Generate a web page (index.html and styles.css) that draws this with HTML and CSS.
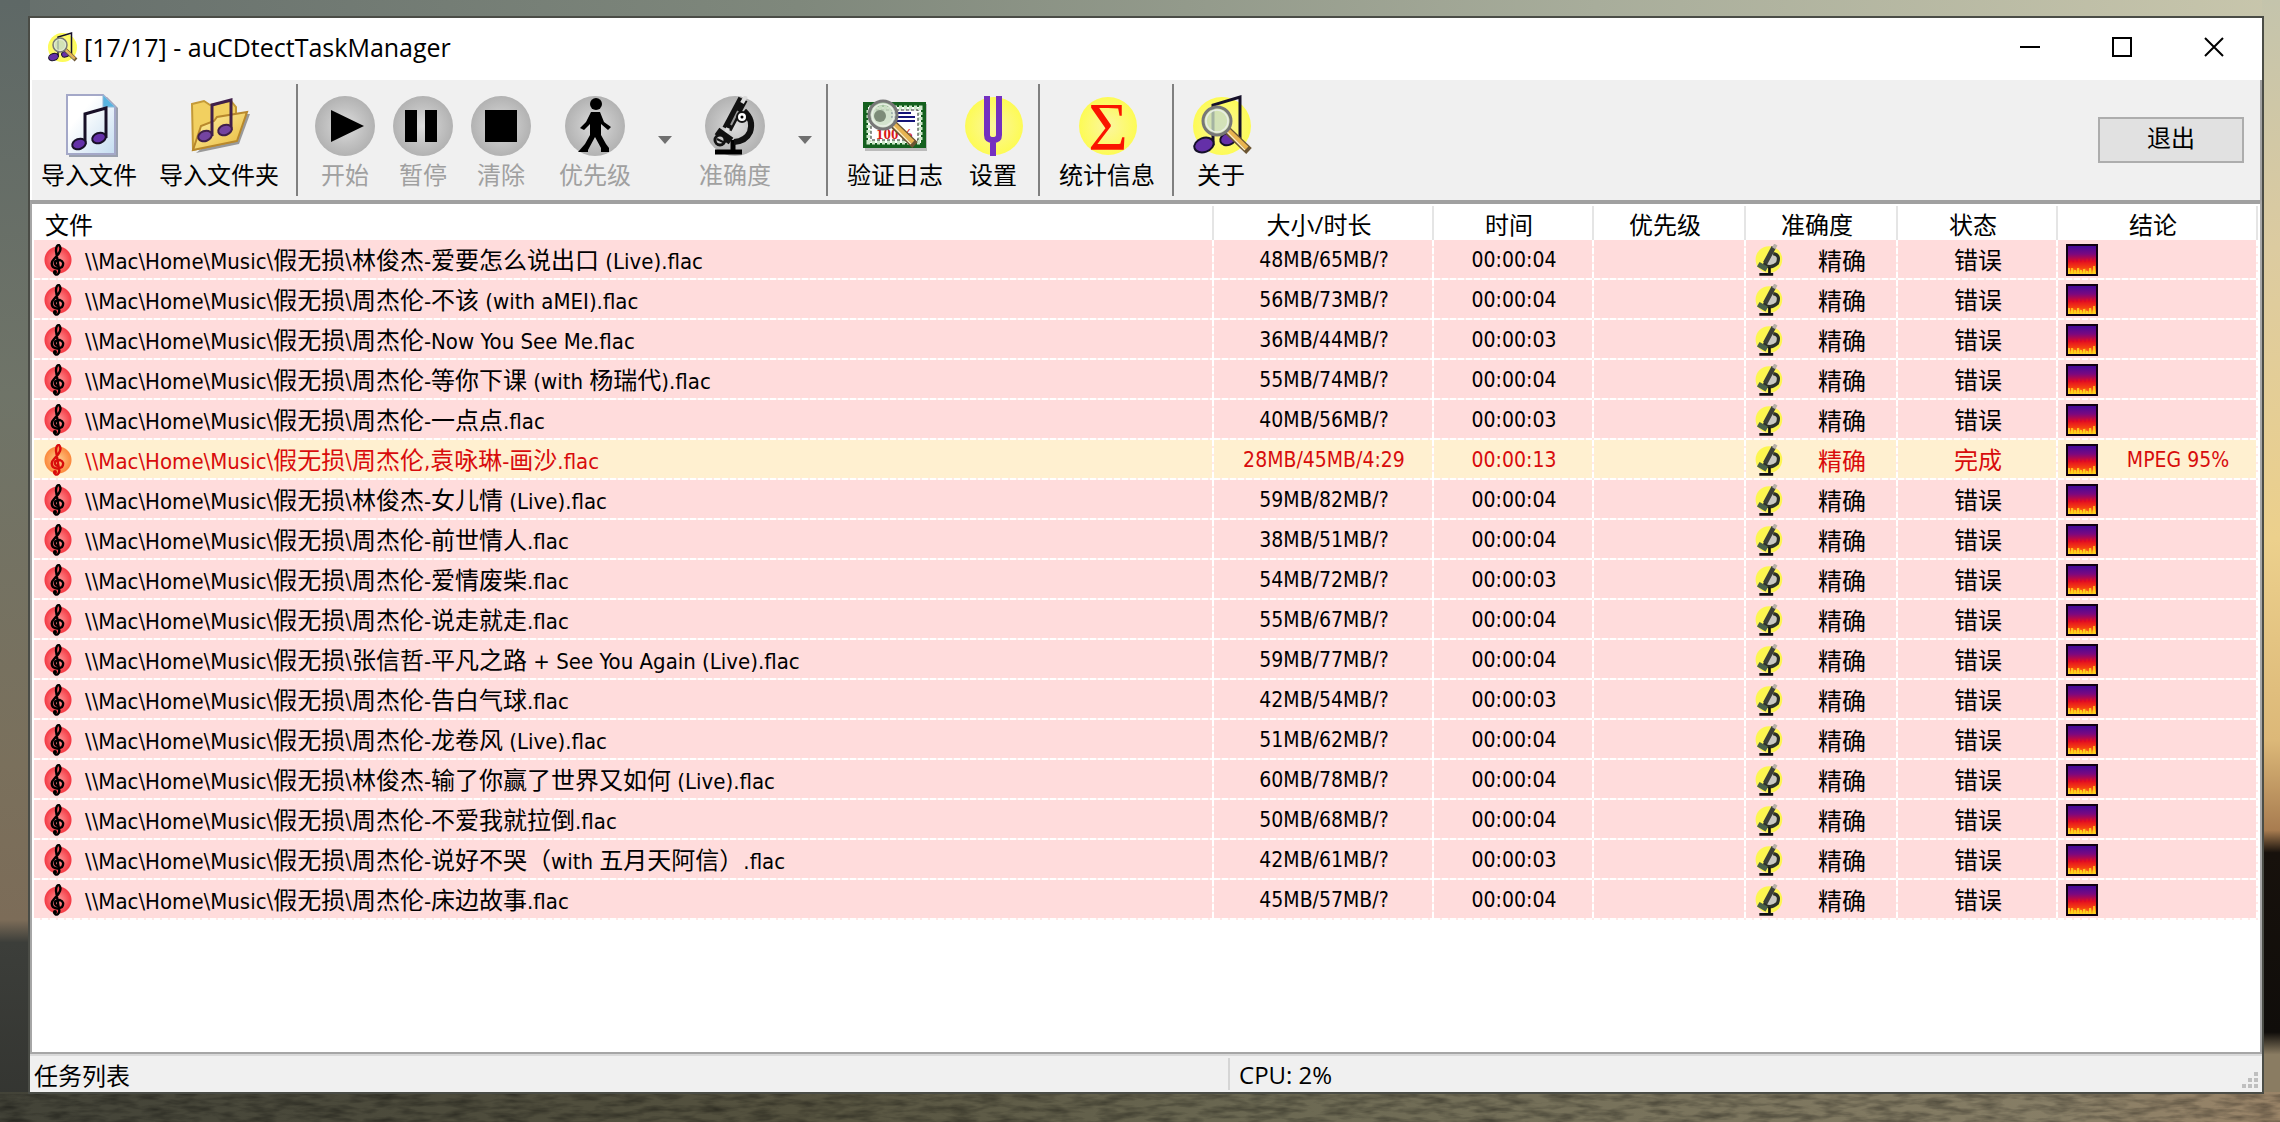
FILE: index.html
```html
<!DOCTYPE html>
<html lang="zh-CN">
<head>
<meta charset="utf-8">
<title>[17/17] - auCDtectTaskManager</title>
<link rel="stylesheet" href="styles.css">
</head>
<body>
<svg class="defs" aria-hidden="true">
  <defs>
    <radialGradient id="gray"><stop offset="0" stop-color="#dedede"/><stop offset="0.6" stop-color="#c2c2c2"/><stop offset="1" stop-color="#b2b2b2"/></radialGradient>
    <radialGradient id="yellow"><stop offset="0" stop-color="#fbf6a0"/><stop offset="1" stop-color="#fdfb55"/></radialGradient>
    <linearGradient id="page" x1="0" y1="0" x2="1" y2="1"><stop offset="0.3" stop-color="#fff"/><stop offset="1" stop-color="#c4dcf0"/></linearGradient>
    <linearGradient id="folder" x1="0" y1="0" x2="1" y2="1"><stop offset="0" stop-color="#fff3a8"/><stop offset="1" stop-color="#e8b838"/></linearGradient>
    <linearGradient id="heat" x1="0" y1="0" x2="0" y2="1"><stop offset="0" stop-color="#3c0a9c"/><stop offset="0.3" stop-color="#7a0880"/><stop offset="0.55" stop-color="#dc0828"/><stop offset="0.75" stop-color="#f6580a"/><stop offset="1" stop-color="#ffe020"/></linearGradient>
    <filter id="ripples" x="0" y="0" width="100%" height="100%"><feTurbulence type="fractalNoise" baseFrequency="0.04 0.16" numOctaves="3" seed="4"/><feColorMatrix values="0 0 0 0 0  0 0 0 0 0  0 0 0 0 0  0 1.6 0 0 -0.6"/></filter>
  </defs>
  <symbol id="scope" viewBox="0 0 60 60">
    <path d="M10 56H37M28 44V55" stroke="#000" stroke-width="5" fill="none"/>
    <path d="M39 15Q49 24 45 36Q41 45 29 46" stroke="#111" stroke-width="6" fill="none"/>
    <path d="M38 3L22 33" stroke="#111" stroke-width="10"/><path d="M41 0L37 7M23 32L21 37" stroke="#ddd" stroke-width="4"/>
    <path d="M33 15L26 29" stroke="#999" stroke-width="2"/>
    <path d="M12 35L26 45" stroke="#111" stroke-width="8"/><circle cx="15" cy="44" r="5" fill="#ccc" stroke="#111" stroke-width="3"/>
    <path d="M12 43L20 47" stroke="#111" stroke-width="2"/>
    <circle cx="37" cy="21" r="5" fill="#fff" stroke="#111" stroke-width="2"/><circle cx="37" cy="21" r="1.5"/>
  </symbol>
  <symbol id="scope-small" viewBox="0 0 60 60">
    <circle cx="28" cy="29" r="25" fill="#fdf650"/>
    <path d="M37 6L20 38Q30 48 44 36Q50 20 36 18" fill="#c8c8c0" stroke="#2c3028" stroke-width="6"/>
    <path d="M37 6L21 36" stroke="#3c403a" stroke-width="9"/><path d="M41 1L37 8" stroke="#b8b0a8" stroke-width="7"/>
    <path d="M8 38L24 47" stroke="#4a6048" stroke-width="10"/><path d="M29 44V56M10 57H36" stroke="#101010" stroke-width="5"/>
  </symbol>
  <symbol id="clef" viewBox="0 0 32 32">
    <path d="M12 28Q13 32 16 30Q18 28 17 25L14 7Q14 1 17 1Q20 4 17 9Q15 12 12 15Q8 19 11 23Q15 26 20 23Q23 18 18 16Q12 16 13 20Q14 22 16 22" fill="none" stroke="currentColor" stroke-width="2.4"/>
    <circle cx="13" cy="28" r="2" fill="currentColor"/>
  </symbol>
  <symbol id="spectrum" viewBox="0 0 32 32">
    <path fill="url(#heat)" stroke="#100010" stroke-width="2" d="M1 1H31V31H1Z"/>
    <path d="M3 21L5 16 7 20 9 15 11 19 13 14 15 19 17 15 19 19 21 14 23 18 25 13 27 18 29 12V24L27 27 25 23 22 28 19 24 16 28 13 23 10 27 7 24 5 27 3 25Z" fill="#f01818" opacity=".4"/>
    <path d="M3 24V30M6 30V24M9 30V26M12 30V24M15 30V26M18 30V25M21 30V27M24 30V24M28 30V22" stroke="#ffd820" stroke-width="2" opacity=".8"/>
  </symbol>
  <symbol id="glass" viewBox="0 0 64 64">
    <path d="M38 37L60 58" stroke="#6b5532" stroke-width="8"/><path d="M38 36L58 55" stroke="#e8b450" stroke-width="4"/><path d="M38 39L56 57" stroke="#fff0c0" stroke-width="1.5"/>
    <circle cx="28" cy="28" r="14" fill="#c8dcc0" fill-opacity=".8" stroke="#777" stroke-width="3"/><circle cx="28" cy="28" r="11" fill="none" stroke="#e8eee4" stroke-width="1.5"/>
  </symbol>
  <symbol id="about" viewBox="0 0 64 64">
    <circle cx="33" cy="33" r="29" fill="url(#yellow)"/>
    <path d="M24 52V12L51 4V46" fill="none" stroke="#15102a" stroke-width="3"/>
    <ellipse cx="15" cy="52" rx="10" ry="7" transform="rotate(-20 15 52)" fill="#6430a8" stroke="#15102a" stroke-width="2"/>
    <ellipse cx="39" cy="46" rx="8" ry="6" transform="rotate(-20 39 46)" fill="#6430a8" stroke="#15102a" stroke-width="2"/>
    <use href="#glass" width="64" height="64"/>
  </symbol>
</svg>
<svg class="water" aria-hidden="true"><rect width="100%" height="100%" filter="url(#ripples)"/></svg>

<main class="window">
  <header class="titlebar">
    <svg class="app-icon"><use href="#about"/></svg>
    <h1 class="title">[17/17] - auCDtectTaskManager</h1>
    <button class="win-btn" aria-label="最小化"><svg viewBox="0 0 20 20"><path d="M0 10H20"/></svg></button>
    <button class="win-btn" aria-label="最大化"><svg viewBox="0 0 20 20"><path d="M1 1H19V19H1Z"/></svg></button>
    <button class="win-btn" aria-label="关闭"><svg viewBox="0 0 20 20"><path d="M1 1L19 19M19 1L1 19"/></svg></button>
  </header>

  <nav class="toolbar">
    <button class="tool"><svg viewBox="0 0 64 64"><path d="M12 4H50L61 15V64H12Z" fill="#9aa0ae"/><path d="M10 2H46L58 14V61H10Z" fill="url(#page)" stroke="#a4a8c8" stroke-width="2"/><path d="M46 2V14H58Z" fill="#58b4e0" stroke="#90b8d8"/><path d="M28 51V21L49 15V45" fill="none" stroke="#181028" stroke-width="3"/><ellipse cx="22" cy="51" rx="7" ry="5" transform="rotate(-20 22 51)" fill="#6430a8" stroke="#181028" stroke-width="2"/><ellipse cx="42" cy="45" rx="7" ry="5" transform="rotate(-20 42 45)" fill="#6430a8" stroke="#181028" stroke-width="2"/></svg><span>导入文件</span></button>
    <button class="tool"><svg viewBox="0 0 64 64"><path d="M9 60L52 51 63 21H57" fill="#999"/><path d="M5 11L17 8 23 12 44 8 49 14V48L6 57Z" fill="#f2d060" stroke="#c49a38" stroke-width="2"/><path d="M6 57L14 33 27 28 30 24 60 19 50 48Z" fill="url(#folder)" stroke="#b8882c" stroke-width="2"/><path d="M25 43V12L44 7V37" fill="none" stroke="#40204a" stroke-width="3"/><ellipse cx="18" cy="43" rx="7" ry="5" transform="rotate(-20 18 43)" fill="#7444a0" stroke="#40204a" stroke-width="2"/><ellipse cx="38" cy="37" rx="7" ry="5" transform="rotate(-20 38 37)" fill="#7444a0" stroke="#40204a" stroke-width="2"/></svg><span>导入文件夹</span></button>
    <hr class="sep">
    <button class="tool icon-tool" disabled><svg viewBox="0 0 64 64"><circle cx="32" cy="33" r="30" fill="url(#gray)"/><path d="M18 17L51 33 18 49Z"/></svg><span>开始</span></button>
    <button class="tool icon-tool" disabled><svg viewBox="0 0 64 64"><circle cx="32" cy="33" r="30" fill="url(#gray)"/><path d="M14 17H26V49H14ZM34 17H46V49H34Z"/></svg><span>暂停</span></button>
    <button class="tool icon-tool" disabled><svg viewBox="0 0 64 64"><circle cx="32" cy="33" r="30" fill="url(#gray)"/><path d="M16 17H48V49H16Z"/></svg><span>清除</span></button>
    <button class="tool menu-tool" disabled><svg viewBox="0 0 64 64"><circle cx="32" cy="33" r="30" fill="url(#gray)"/><circle cx="33" cy="11" r="6"/><path d="M28 19H37L41 29 48 34 45 37 38 31V42L43 51 46 55V59H38V55L32 44 25 57V59H15L22 51 27 42V31L21 37 17 35 23 29Z"/></svg><span>优先级</span></button>
    <button class="drop" aria-label="优先级选项" disabled></button>
    <button class="tool menu-tool" disabled><svg viewBox="0 0 64 64"><circle cx="32" cy="33" r="30" fill="url(#gray)"/><use href="#scope" x="2" y="3" width="60" height="60"/></svg><span>准确度</span></button>
    <button class="drop" aria-label="准确度选项" disabled></button>
    <hr class="sep">
    <button class="tool"><svg viewBox="0 0 64 64"><path d="M2 11H64V58H2Z" fill="#bbb"/><path d="M0 9H63V55H0Z" fill="#14601e"/><path d="M5 14H58V50H5Z" fill="#fff"/><path d="M6 15H57V49H6Z" fill="none" stroke="#cfe8cc" stroke-width="5" stroke-dasharray="3 2"/><path d="M8 17H55V47H8Z" fill="none" stroke="#333" stroke-width="1" stroke-dasharray="3 2"/><path d="M28 20H48M28 24H52M30 28H52" stroke="#141478" stroke-width="2"/><text x="13" y="46" class="mark">100%</text><use href="#glass" x="-8" y="-6" width="64" height="64"/><circle cx="17" cy="23" r="6" fill="#7d8c78"/></svg><span>验证日志</span></button>
    <button class="tool icon-tool"><svg viewBox="0 0 64 64"><circle cx="33" cy="33" r="29" fill="url(#yellow)"/><path d="M26 3V42Q26 47 32 47Q38 47 38 42V3M32 47V63" fill="none" stroke="#7430c0" stroke-width="6"/></svg><span>设置</span></button>
    <hr class="sep">
    <button class="tool"><svg viewBox="0 0 64 64"><circle cx="33" cy="33" r="29" fill="url(#yellow)"/><text x="33" y="56" class="sigma">Σ</text></svg><span>统计信息</span></button>
    <hr class="sep">
    <button class="tool icon-tool"><svg><use href="#about"/></svg><span>关于</span></button>
    <button class="exit">退出</button>
  </nav>

  <section class="list">
    <table>
      <colgroup><col><col class="c-size"><col class="c-time"><col class="c-mid"><col class="c-mid"><col class="c-time"><col class="c-result"></colgroup>
      <thead><tr><th>文件</th><th>大小/时长</th><th>时间</th><th>优先级</th><th>准确度</th><th>状态</th><th>结论</th></tr></thead>
      <tbody>
        <tr><td><div class="file"><svg><use href="#clef"/></svg><span>\\Mac\Home\Music\<i>假无损</i>\<i>林俊杰</i>-<i>爱要怎么说出口</i> (Live).flac</span></div></td><td>48MB/65MB/?</td><td>00:00:04</td><td></td><td><div class="pic"><svg><use href="#scope-small"/></svg><i>精确</i></div></td><td><i>错误</i></td><td><div class="pic"><svg><use href="#spectrum"/></svg><span></span></div></td></tr>
        <tr><td><div class="file"><svg><use href="#clef"/></svg><span>\\Mac\Home\Music\<i>假无损</i>\<i>周杰伦</i>-<i>不该</i> (with aMEI).flac</span></div></td><td>56MB/73MB/?</td><td>00:00:04</td><td></td><td><div class="pic"><svg><use href="#scope-small"/></svg><i>精确</i></div></td><td><i>错误</i></td><td><div class="pic"><svg><use href="#spectrum"/></svg><span></span></div></td></tr>
        <tr><td><div class="file"><svg><use href="#clef"/></svg><span>\\Mac\Home\Music\<i>假无损</i>\<i>周杰伦</i>-Now You See Me.flac</span></div></td><td>36MB/44MB/?</td><td>00:00:03</td><td></td><td><div class="pic"><svg><use href="#scope-small"/></svg><i>精确</i></div></td><td><i>错误</i></td><td><div class="pic"><svg><use href="#spectrum"/></svg><span></span></div></td></tr>
        <tr><td><div class="file"><svg><use href="#clef"/></svg><span>\\Mac\Home\Music\<i>假无损</i>\<i>周杰伦</i>-<i>等你下课</i> (with <i>杨瑞代</i>).flac</span></div></td><td>55MB/74MB/?</td><td>00:00:04</td><td></td><td><div class="pic"><svg><use href="#scope-small"/></svg><i>精确</i></div></td><td><i>错误</i></td><td><div class="pic"><svg><use href="#spectrum"/></svg><span></span></div></td></tr>
        <tr><td><div class="file"><svg><use href="#clef"/></svg><span>\\Mac\Home\Music\<i>假无损</i>\<i>周杰伦</i>-<i>一点点</i>.flac</span></div></td><td>40MB/56MB/?</td><td>00:00:03</td><td></td><td><div class="pic"><svg><use href="#scope-small"/></svg><i>精确</i></div></td><td><i>错误</i></td><td><div class="pic"><svg><use href="#spectrum"/></svg><span></span></div></td></tr>
        <tr class="done"><td><div class="file"><svg><use href="#clef"/></svg><span>\\Mac\Home\Music\<i>假无损</i>\<i>周杰伦</i>,<i>袁咏琳</i>-<i>画沙</i>.flac</span></div></td><td>28MB/45MB/4:29</td><td>00:00:13</td><td></td><td><div class="pic"><svg><use href="#scope-small"/></svg><i>精确</i></div></td><td><i>完成</i></td><td><div class="pic"><svg><use href="#spectrum"/></svg><span>MPEG 95%</span></div></td></tr>
        <tr><td><div class="file"><svg><use href="#clef"/></svg><span>\\Mac\Home\Music\<i>假无损</i>\<i>林俊杰</i>-<i>女儿情</i> (Live).flac</span></div></td><td>59MB/82MB/?</td><td>00:00:04</td><td></td><td><div class="pic"><svg><use href="#scope-small"/></svg><i>精确</i></div></td><td><i>错误</i></td><td><div class="pic"><svg><use href="#spectrum"/></svg><span></span></div></td></tr>
        <tr><td><div class="file"><svg><use href="#clef"/></svg><span>\\Mac\Home\Music\<i>假无损</i>\<i>周杰伦</i>-<i>前世情人</i>.flac</span></div></td><td>38MB/51MB/?</td><td>00:00:04</td><td></td><td><div class="pic"><svg><use href="#scope-small"/></svg><i>精确</i></div></td><td><i>错误</i></td><td><div class="pic"><svg><use href="#spectrum"/></svg><span></span></div></td></tr>
        <tr><td><div class="file"><svg><use href="#clef"/></svg><span>\\Mac\Home\Music\<i>假无损</i>\<i>周杰伦</i>-<i>爱情废柴</i>.flac</span></div></td><td>54MB/72MB/?</td><td>00:00:03</td><td></td><td><div class="pic"><svg><use href="#scope-small"/></svg><i>精确</i></div></td><td><i>错误</i></td><td><div class="pic"><svg><use href="#spectrum"/></svg><span></span></div></td></tr>
        <tr><td><div class="file"><svg><use href="#clef"/></svg><span>\\Mac\Home\Music\<i>假无损</i>\<i>周杰伦</i>-<i>说走就走</i>.flac</span></div></td><td>55MB/67MB/?</td><td>00:00:04</td><td></td><td><div class="pic"><svg><use href="#scope-small"/></svg><i>精确</i></div></td><td><i>错误</i></td><td><div class="pic"><svg><use href="#spectrum"/></svg><span></span></div></td></tr>
        <tr><td><div class="file"><svg><use href="#clef"/></svg><span>\\Mac\Home\Music\<i>假无损</i>\<i>张信哲</i>-<i>平凡之路</i> + See You Again (Live).flac</span></div></td><td>59MB/77MB/?</td><td>00:00:04</td><td></td><td><div class="pic"><svg><use href="#scope-small"/></svg><i>精确</i></div></td><td><i>错误</i></td><td><div class="pic"><svg><use href="#spectrum"/></svg><span></span></div></td></tr>
        <tr><td><div class="file"><svg><use href="#clef"/></svg><span>\\Mac\Home\Music\<i>假无损</i>\<i>周杰伦</i>-<i>告白气球</i>.flac</span></div></td><td>42MB/54MB/?</td><td>00:00:03</td><td></td><td><div class="pic"><svg><use href="#scope-small"/></svg><i>精确</i></div></td><td><i>错误</i></td><td><div class="pic"><svg><use href="#spectrum"/></svg><span></span></div></td></tr>
        <tr><td><div class="file"><svg><use href="#clef"/></svg><span>\\Mac\Home\Music\<i>假无损</i>\<i>周杰伦</i>-<i>龙卷风</i> (Live).flac</span></div></td><td>51MB/62MB/?</td><td>00:00:04</td><td></td><td><div class="pic"><svg><use href="#scope-small"/></svg><i>精确</i></div></td><td><i>错误</i></td><td><div class="pic"><svg><use href="#spectrum"/></svg><span></span></div></td></tr>
        <tr><td><div class="file"><svg><use href="#clef"/></svg><span>\\Mac\Home\Music\<i>假无损</i>\<i>林俊杰</i>-<i>输了你赢了世界又如何</i> (Live).flac</span></div></td><td>60MB/78MB/?</td><td>00:00:04</td><td></td><td><div class="pic"><svg><use href="#scope-small"/></svg><i>精确</i></div></td><td><i>错误</i></td><td><div class="pic"><svg><use href="#spectrum"/></svg><span></span></div></td></tr>
        <tr><td><div class="file"><svg><use href="#clef"/></svg><span>\\Mac\Home\Music\<i>假无损</i>\<i>周杰伦</i>-<i>不爱我就拉倒</i>.flac</span></div></td><td>50MB/68MB/?</td><td>00:00:04</td><td></td><td><div class="pic"><svg><use href="#scope-small"/></svg><i>精确</i></div></td><td><i>错误</i></td><td><div class="pic"><svg><use href="#spectrum"/></svg><span></span></div></td></tr>
        <tr><td><div class="file"><svg><use href="#clef"/></svg><span>\\Mac\Home\Music\<i>假无损</i>\<i>周杰伦</i>-<i>说好不哭（</i>with <i>五月天阿信）</i>.flac</span></div></td><td>42MB/61MB/?</td><td>00:00:03</td><td></td><td><div class="pic"><svg><use href="#scope-small"/></svg><i>精确</i></div></td><td><i>错误</i></td><td><div class="pic"><svg><use href="#spectrum"/></svg><span></span></div></td></tr>
        <tr><td><div class="file"><svg><use href="#clef"/></svg><span>\\Mac\Home\Music\<i>假无损</i>\<i>周杰伦</i>-<i>床边故事</i>.flac</span></div></td><td>45MB/57MB/?</td><td>00:00:04</td><td></td><td><div class="pic"><svg><use href="#scope-small"/></svg><i>精确</i></div></td><td><i>错误</i></td><td><div class="pic"><svg><use href="#spectrum"/></svg><span></span></div></td></tr>
      </tbody>
    </table>
  </section>

  <footer class="status">
    <span class="status-main">任务列表</span>
    <span class="status-cpu">CPU: 2%</span>
    <svg class="grip" viewBox="0 0 16 16" aria-hidden="true"><path d="M12 0h4v4h-4zM6 6h4v4H6zM12 6h4v4h-4zM0 12h4v4H0zM6 12h4v4H6zM12 12h4v4h-4z"/></svg>
  </footer>
</main>
</body>
</html>
```
FILE: styles.css
```css
* { box-sizing: border-box; }

body {
  margin: 0;
  min-height: 100vh;
  display: flex;
  padding: 16px 16px 28px 28px;
  font-family: "Open Sans", "Noto Sans CJK SC", sans-serif;
  font-size: 24px;
  color: #000;
  background:
    linear-gradient(90deg, #434338, #55523f 35%, #6b6852 55%, #877e66 90%, #9a8468) bottom / 100% 30px no-repeat,
    linear-gradient(#c4c4ac, #dccba0 22%, #ecd08c 48%, #dcb878 66%, #a87c50 74%, #17110c 76%, #100d0a 92%, #8a7c62 94%) right / 18px 100% no-repeat,
    linear-gradient(#5e6866, #6f7468 35%, #7a705c 68%, #7c6c58 82%, #3c3e3a 84%, #333430) left / 30px 100% no-repeat,
    linear-gradient(90deg, #666f6c, #7f887c 35%, #a8ad9b 70%, #c8c6ac);
}

.defs { position: absolute; width: 0; height: 0; }
.water { position: absolute; z-index: -1; left: 0; bottom: 0; width: 100%; height: 28px; opacity: .45; }

button { font: inherit; color: inherit; border: 0; background: none; padding: 0; }

.window {
  flex: 1;
  min-width: 0;
  display: flex;
  flex-direction: column;
  border: 2px solid #4a4c46;
  background: #fff;
}

.titlebar { display: flex; align-items: center; height: 62px; padding: 0 2px 4px 16px; }
.app-icon { width: 32px; height: 32px; margin-right: 6px; }
.title { flex: 1; margin: 0; font-size: 25px; font-weight: 400; }
.win-btn { width: 92px; height: 56px; display: grid; place-items: center; }
.win-btn svg { width: 20px; height: 20px; overflow: visible; fill: none; stroke: #000; stroke-width: 2; }

.toolbar {
  display: flex;
  height: 120px;
  padding-right: 16px;
  background: #f0f0f0;
  border: 0 solid #a0a0a0;
  border-right-width: 2px;
  border-left: 2px solid #fff;
}
.tool {
  display: flex;
  flex-direction: column;
  align-items: center;
  padding: 13px 11px 0;
  line-height: 36px;
  white-space: nowrap;
}
.tool:first-child { padding-left: 9px; }
.tool svg { width: 64px; height: 64px; flex: none; overflow: visible; }
.tool:disabled { color: #a0a0a0; }
.icon-tool { padding-left: 7px; padding-right: 7px; }
.menu-tool { padding-left: 19px; padding-right: 19px; }
.sep { width: 2px; height: 112px; margin: 4px 8px 4px 6px; border: 0; background: #808080; }
.drop { width: 30px; display: grid; place-items: center; }
.drop::before { content: ""; border: 7px solid transparent; border-top: 8px solid #707070; border-bottom: 0; }
.mark { font: bold 15px "Liberation Serif", serif; fill: #d81818; }
.sigma { font: 68px "Liberation Serif", serif; fill: #fa1400; text-anchor: middle; }
.exit {
  align-self: center;
  margin-left: auto;
  width: 146px;
  height: 46px;
  padding-bottom: 4px;
  line-height: 36px;
  border: 2px solid #adadad;
  background: #e1e1e1;
}

.list { flex: 1; border: 2px solid #a6a6a6; border-top: 4px solid #a0a0a0; padding: 0 2px; }
table { width: 100%; table-layout: fixed; border-collapse: separate; border-spacing: 0; }
.c-size { width: 220px; }
.c-time { width: 160px; }
.c-mid { width: 152px; }
.c-result { width: 200px; }
th {
  height: 36px;
  padding: 6px 10px 0 0;
  font-weight: 400;
  line-height: 30px;
  background: linear-gradient(#e5e5e5, #e5e5e5) right bottom / 2px 34px no-repeat;
}
th:first-child { text-align: left; padding-left: 11px; }
td {
  height: 40px;
  padding: 0;
  text-align: center;
  white-space: nowrap;
  font-family: "DejaVu Sans Condensed", "Noto Sans CJK SC", sans-serif;
  font-size: 21px;
  line-height: 36px;
  background:
    repeating-linear-gradient(90deg, #fff 0 6px, #ffeae8 6px 8px) bottom / 100% 2px no-repeat,
    repeating-linear-gradient(#fff 0 6px, #ffeae8 6px 8px) right / 2px 100% no-repeat,
    #ffdcdc;
}
td i { font-family: "Noto Sans CJK SC", sans-serif; font-style: normal; font-size: 24px; }
.file { display: flex; align-items: center; gap: 11px; padding-left: 8px; font-size: 22px; }
.file svg { width: 32px; height: 32px; background: radial-gradient(circle 14px, #ff9a9a, #f43c46 13px, transparent 14px); }
.pic { display: flex; align-items: center; padding-left: 8px; }
.pic svg { width: 32px; height: 32px; }
.pic > :last-child { flex: 1; }
.done td { color: #d80c0c; background-color: #fff0d0; }
.done .file svg { background: radial-gradient(circle 14px, #ffd090, #fb8a3e 13px, transparent 14px); }

.status { display: flex; height: 38px; padding: 0 4px; background: #f0f0f0; border-top: 2px solid #d9d9d9; }
.status-main { flex: 1200; padding-top: 2px; line-height: 36px; }
.status-cpu { flex: 1008; border-left: 2px solid #d5d5d5; padding-left: 9px; margin: 2px 0; line-height: 34px; }
.grip { align-self: flex-end; width: 16px; height: 16px; margin-bottom: 4px; fill: #bfbfbf; }
```
